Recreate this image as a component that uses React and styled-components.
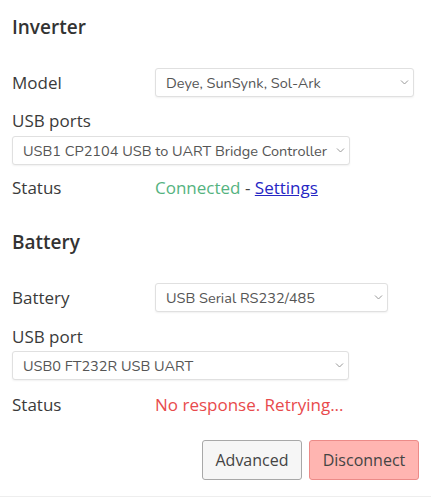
import React from 'react';
import styled, { createGlobalStyle } from 'styled-components';

const GlobalStyle = createGlobalStyle`
  body {
    margin: 0;
    background: #fff;
    font-family: 'Open Sans', 'Noto Sans', sans-serif;
    color: #333;
  }
`;

const Page = styled.div`
  width: 431px;
  height: 500px;
  box-sizing: border-box;
  padding: 0 12px;
  display: flex;
  flex-direction: column;
`;

const Heading = styled.h2`
  margin: ${(p) => p.$top}px 0 0;
  font-size: 19px;
  line-height: 24px;
  font-weight: 600;
  color: #333;
`;

const Row = styled.div`
  display: grid;
  grid-template-columns: 143px auto;
  align-items: center;
  margin-top: ${(p) => p.$top}px;
  min-height: 24px;
`;

const Label = styled.div`
  font-size: 17px;
  line-height: 24px;
  color: #3a3a3a;
  margin-top: ${(p) => p.$top || 0}px;
`;

const SelectWrap = styled.div`
  position: relative;
  width: ${(p) => p.$width}px;
  margin-top: ${(p) => p.$top || 0}px;
`;

const Select = styled.select`
  appearance: none;
  width: 100%;
  height: 29px;
  box-sizing: border-box;
  border: 1px solid #e0e0e0;
  border-radius: 3px;
  background: #fff;
  box-shadow: 0 1px 2px rgba(0, 0, 0, 0.06);
  padding: 0 14px 0 10px;
  font-family: 'Nunito', 'Noto Sans', sans-serif;
  font-size: 14.5px;
  color: #555;
  outline: none;
`;

const Chevron = styled.svg`
  position: absolute;
  right: 5px;
  top: 11px;
  pointer-events: none;
`;

const StatusText = styled.span`
  font-size: 17px;
  line-height: 24px;
  color: ${(p) => p.$color};
`;

const Link = styled.a`
  color: #2626c4;
  text-decoration: underline;
`;

const Actions = styled.div`
  display: flex;
  justify-content: flex-end;
  gap: 7px;
  margin-top: 23px;
`;

const Button = styled.button`
  height: 40px;
  width: ${(p) => p.$width}px;
  padding: 0;
  border-radius: 3px;
  font-family: 'Open Sans', 'Noto Sans', sans-serif;
  font-size: 16px;
  color: #444;
  border: 1px solid ${(p) => (p.$danger ? '#ec8b88' : '#a8a8a8')};
  background: ${(p) => (p.$danger ? '#ffb5b1' : '#f6f6f6')};
`;

const Divider = styled.div`
  margin: 16px -12px 0;
  border-top: 1px solid #eee;
`;

const Dropdown = ({ value, width, top }) => (
  <SelectWrap $width={width} $top={top}>
    <Select defaultValue={value}>
      <option>{value}</option>
    </Select>
    <Chevron width="9" height="6" viewBox="0 0 9 6">
      <path d="M1 1.5l3.5 3.5 3.5-3.5" fill="none" stroke="#999" strokeWidth="1" />
    </Chevron>
  </SelectWrap>
);

const App = () => (
  <>
    <GlobalStyle />
    <Page>
      <Heading $top={15}>Inverter</Heading>
      <Row $top={29}>
        <Label>Model</Label>
        <Dropdown value="Deye, SunSynk, Sol-Ark" width={259} />
      </Row>
      <Label $top={12}>USB ports</Label>
      <Dropdown value="USB1 CP2104 USB to UART Bridge Controller" width={338} top={3} />
      <Row $top={11}>
        <Label>Status</Label>
        <StatusText $color="#55b37f">
          Connected <StatusText $color="#444">-</StatusText> <Link href="#">Settings</Link>
        </StatusText>
      </Row>

      <Heading $top={30}>Battery</Heading>
      <Row $top={29}>
        <Label>Battery</Label>
        <Dropdown value="USB Serial RS232/485" width={233} />
      </Row>
      <Label $top={13}>USB port</Label>
      <Dropdown value="USB0 FT232R USB UART" width={337} top={2} />
      <Row $top={13}>
        <Label>Status</Label>
        <StatusText $color="#e84a4c">No response. Retrying...</StatusText>
      </Row>

      <Actions>
        <Button $width={100}>Advanced</Button>
        <Button $danger $width={110}>Disconnect</Button>
      </Actions>
      <Divider />
    </Page>
  </>
);

export default App;
